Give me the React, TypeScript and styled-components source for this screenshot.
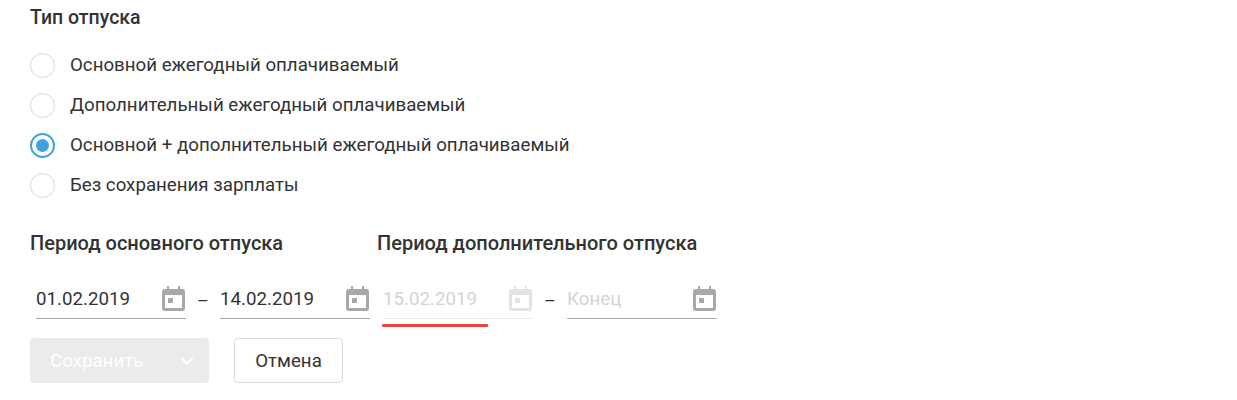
import React from "react";
import styled, { createGlobalStyle } from "styled-components";

const Global = createGlobalStyle`
  html, body { margin: 0; padding: 0; background: #fff; }
  body { font-family: Roboto, "Liberation Sans", sans-serif; color: #333; }
`;

const Page = styled.div`
  width: 1237px;
  height: 400px;
  overflow: hidden;
  box-sizing: border-box;
  padding: 6px 0 0 30px;
`;

const Heading = styled.div<{ $small?: boolean }>`
  font-size: ${(p) => (p.$small ? "19.5px" : "20px")};
  line-height: 24px;
  font-weight: 500;
  color: #333;
  white-space: nowrap;
`;

const RadioList = styled.div`
  display: flex;
  flex-direction: column;
  margin-top: 15px;
  margin-bottom: 26px;
`;

const RadioRow = styled.label`
  display: flex;
  align-items: center;
  height: 40px;
  gap: 15px;
  font-size: 18.72px;
  color: #333;
`;

const RadioCircle = styled.span<{ $checked?: boolean }>`
  box-sizing: border-box;
  width: 25px;
  height: 25px;
  border-radius: 50%;
  border: ${(p) => (p.$checked ? "2px solid #3fa2e0" : "1px solid #d9d9d9")};
  display: flex;
  align-items: center;
  justify-content: center;
  &::after {
    content: "";
    display: ${(p) => (p.$checked ? "block" : "none")};
    width: 13px;
    height: 13px;
    border-radius: 50%;
    background: #3fa2e0;
  }
`;

const Periods = styled.div`
  display: flex;
`;

const Period = styled.div`
  width: 347px;
  &:last-child { width: auto; }
`;

const Fields = styled.div`
  display: flex;
  align-items: flex-start;
  margin-top: 24px;
  padding-left: 6px;
`;

const Field = styled.div<{ $faded?: boolean }>`
  position: relative;
  box-sizing: border-box;
  width: 150px;
  height: 40px;
  display: flex;
  align-items: center;
  justify-content: space-between;
  border-bottom: 1px solid ${(p) => (p.$faded ? "#e8e8e8" : "#a8a8a8")};
`;

const FieldText = styled.span<{ $muted?: boolean }>`
  font-size: 18.72px;
  color: ${(p) => (p.$muted ? "#d4d4d4" : "#333")};
`;

const Dash = styled.span`
  width: 34px;
  height: 40px;
  text-align: center;
  font-size: 18px;
  line-height: 44px;
  color: #333;
`;

const ErrorBar = styled.span`
  position: absolute;
  left: -1px;
  bottom: -9px;
  width: 106px;
  height: 3px;
  border-radius: 1px;
  background: #e8453c;
`;

const Actions = styled.div`
  display: flex;
  gap: 25px;
  margin-top: 19px;
`;

const SaveButton = styled.div`
  box-sizing: border-box;
  width: 179px;
  height: 45px;
  background: #ebebeb;
  border-radius: 4px;
  display: flex;
  align-items: center;
  justify-content: space-between;
  padding: 0 15px 0 20px;
  font-size: 18.72px;
  color: #fff;
`;

const CancelButton = styled.div`
  box-sizing: border-box;
  width: 109px;
  height: 45px;
  background: #fff;
  border: 1px solid #d9d9d9;
  border-radius: 4px;
  display: flex;
  align-items: center;
  justify-content: center;
  font-size: 18.72px;
  color: #333;
`;

const IconWrap = styled.svg`
  margin-right: 1px;
  flex: none;
`;

const CalendarIcon = ({ color }: { color: string }) => (
  <IconWrap width="23" height="25" viewBox="0 0 23 25">
    <path
      fill={color}
      fillRule="evenodd"
      d="M5 0h2v3h9V0h2v3h2a3 3 0 0 1 3 3v16a3 3 0 0 1-3 3H3a3 3 0 0 1-3-3V6a3 3 0 0 1 3-3h2V0zM3 9v13h17V9H3zm3 3h5v5H6v-5z"
    />
  </IconWrap>
);

const Chevron = () => (
  <svg width="14" height="10" viewBox="0 0 14 10">
    <path d="M1.5 2l5.5 5.5L12.5 2" fill="none" stroke="#fff" strokeWidth="2.4" />
  </svg>
);

const options = [
  "Основной ежегодный оплачиваемый",
  "Дополнительный ежегодный оплачиваемый",
  "Основной + дополнительный ежегодный оплачиваемый",
  "Без сохранения зарплаты",
];

export default function App() {
  return (
    <Page>
      <Global />
      <Heading $small>Тип отпуска</Heading>
      <RadioList>
        {options.map((o, i) => (
          <RadioRow key={o}>
            <RadioCircle $checked={i === 2} />
            {o}
          </RadioRow>
        ))}
      </RadioList>
      <Periods>
        <Period>
          <Heading>Период основного отпуска</Heading>
          <Fields>
            <Field>
              <FieldText>01.02.2019</FieldText>
              <CalendarIcon color="#a8a8a8" />
            </Field>
            <Dash>–</Dash>
            <Field>
              <FieldText>14.02.2019</FieldText>
              <CalendarIcon color="#a8a8a8" />
            </Field>
          </Fields>
        </Period>
        <Period>
          <Heading>Период дополнительного отпуска</Heading>
          <Fields>
            <Field $faded>
              <FieldText $muted>15.02.2019</FieldText>
              <CalendarIcon color="#e3e3e3" />
              <ErrorBar />
            </Field>
            <Dash>–</Dash>
            <Field>
              <FieldText $muted>Конец</FieldText>
              <CalendarIcon color="#a8a8a8" />
            </Field>
          </Fields>
        </Period>
      </Periods>
      <Actions>
        <SaveButton>
          Сохранить
          <Chevron />
        </SaveButton>
        <CancelButton>Отмена</CancelButton>
      </Actions>
    </Page>
  );
}
